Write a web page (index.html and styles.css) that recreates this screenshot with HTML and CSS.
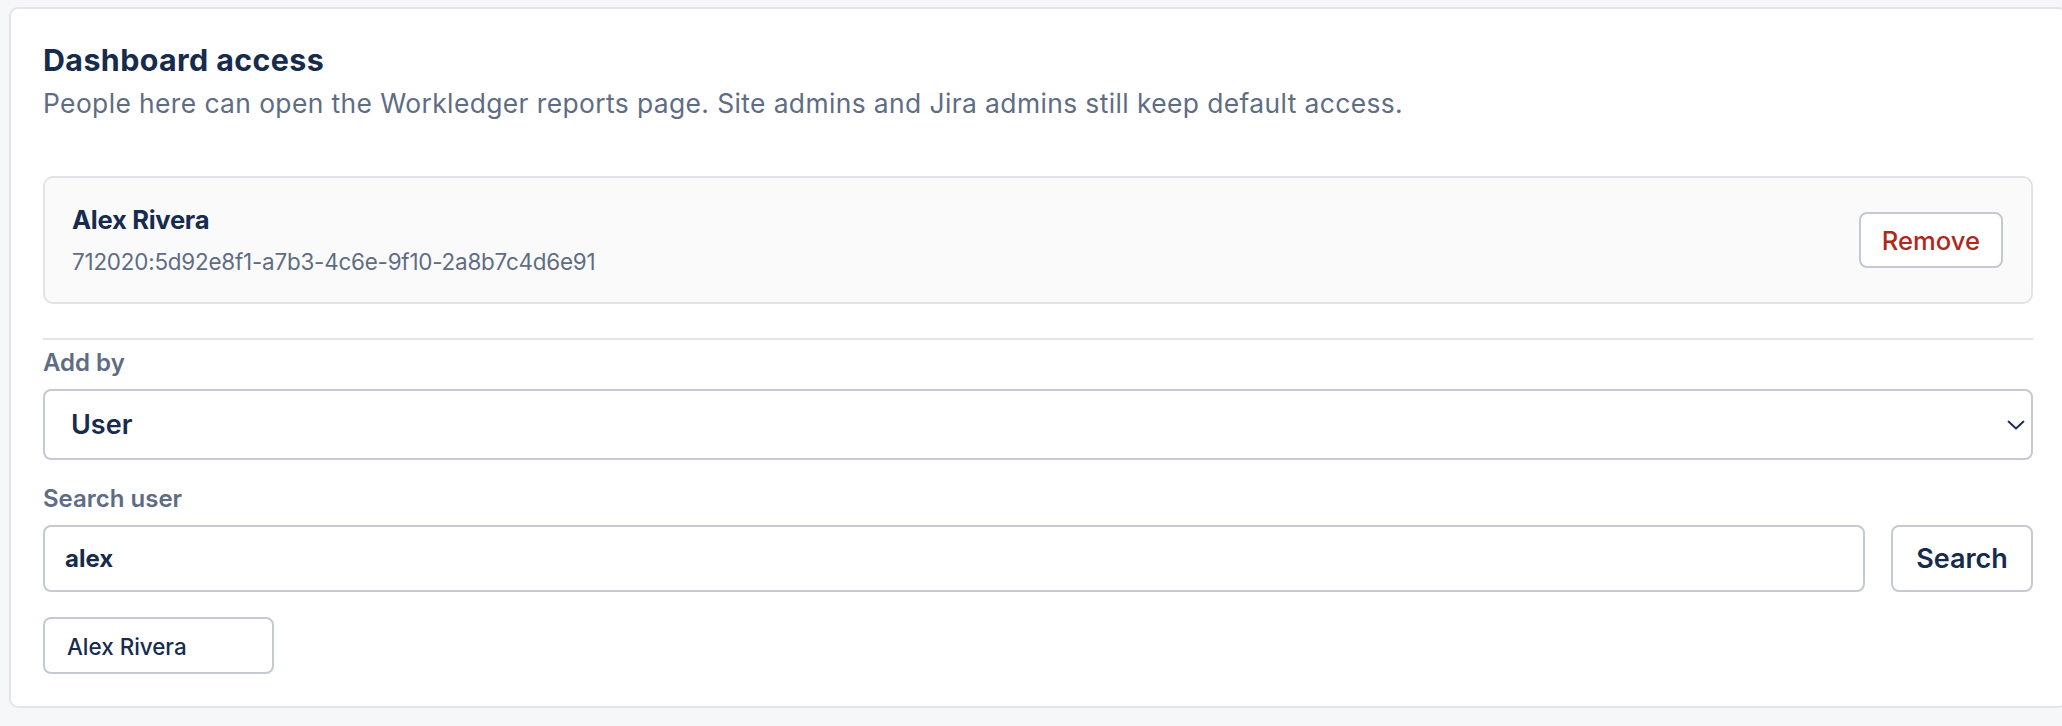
FILE: index.html
```html
<!DOCTYPE html>
<html lang="en">
<head>
<meta charset="utf-8">
<title>Dashboard access</title>
<link rel="stylesheet" href="styles.css">
</head>
<body>
  <section class="panel">
    <h2 class="panel-title">Dashboard access</h2>
    <p class="panel-desc">People here can open the Workledger reports page. Site admins and Jira admins still keep default access.</p>

    <div class="member">
      <div class="member-info">
        <div class="member-name">Alex Rivera</div>
        <div class="member-id">712020:5d92e8f1-a7b3-4c6e-9f10-2a8b7c4d6e91</div>
      </div>
      <button class="btn btn-danger" type="button">Remove</button>
    </div>

    <hr class="divider">

    <label class="field-label" for="add-by">Add by</label>
    <div class="select-wrap">
      <select id="add-by" class="select">
        <option>User</option>
        <option>Group</option>
      </select>
      <svg class="select-arrow" width="18" height="10" viewBox="0 0 18 10" aria-hidden="true">
        <path d="M1.5 1.5 L9 8.5 L16.5 1.5" fill="none" stroke="#172b4d" stroke-width="1.8" stroke-linecap="round" stroke-linejoin="round"/>
      </svg>
    </div>

    <label class="field-label field-label-gap" for="search-user">Search user</label>
    <div class="search-row">
      <input id="search-user" class="input" type="text" value="alex">
      <button class="btn btn-search" type="button">Search</button>
    </div>

    <div class="results">
      <button class="btn btn-result" type="button">Alex Rivera</button>
    </div>
  </section>
</body>
</html>
```

FILE: styles.css
```css
html, body {
  margin: 0;
  padding: 0;
  overflow: hidden;
}

body {
  background: #f6f7f9;
  font-family: "Inter", "Noto Sans", "Liberation Sans", sans-serif;
  color: #172b4d;
}

.panel {
  box-sizing: border-box;
  width: 2058px;
  margin: 7px 0 0 9px;
  padding: 33px 32px 32px 32px;
  background: #ffffff;
  border: 2px solid #e3e5ea;
  border-radius: 9px;
}

.panel-title {
  margin: 0;
  font-size: 30.4px;
  line-height: 36px;
  font-weight: 700;
  color: #172b4d;
  letter-spacing: 0.4px;
}

.panel-desc {
  margin: 6px 0 0 0;
  font-size: 26.4px;
  line-height: 38px;
  font-weight: 400;
  color: #5e6c84;
  letter-spacing: 0.4px;
}

.member {
  display: flex;
  align-items: center;
  justify-content: space-between;
  margin-top: 54px;
  padding: 24px 28px 24px 27px;
  background: #fafafb;
  border: 2px solid #e1e3e8;
  border-radius: 10px;
}

.member-info {
  display: flex;
  flex-direction: column;
}

.member-name {
  font-size: 25.6px;
  line-height: 36px;
  font-weight: 700;
  color: #172b4d;
  letter-spacing: -0.3px;
}

.member-id {
  margin-top: 8px;
  font-size: 22.4px;
  line-height: 32px;
  color: #5e6c84;
  letter-spacing: -0.2px;
}

.btn {
  box-sizing: border-box;
  font-family: inherit;
  background: #ffffff;
  border: 2px solid #c4c9d2;
  border-radius: 8px;
  cursor: pointer;
}

.btn-danger {
  height: 56px;
  padding: 0 21px;
  font-size: 25.6px;
  font-weight: 500;
  color: #b0281c;
}

.divider {
  margin: 34px 0 0 0;
  border: 0;
  height: 2px;
  background: #e1e3e8;
}

.field-label {
  display: block;
  margin-top: 7px;
  font-size: 24px;
  line-height: 32px;
  font-weight: 600;
  color: #5e6c84;
}

.field-label-gap {
  margin-top: 23px;
}

.select-wrap {
  position: relative;
  margin-top: 10px;
}

.select {
  box-sizing: border-box;
  display: block;
  width: 100%;
  height: 71px;
  padding: 0 40px 0 26px;
  font-family: inherit;
  font-size: 27px;
  font-weight: 600;
  color: #172b4d;
  background: #ffffff;
  border: 2px solid #c4c9d2;
  border-radius: 8px;
  appearance: none;
  -webkit-appearance: none;
}

.select-arrow {
  position: absolute;
  right: 8px;
  top: 31px;
  pointer-events: none;
}

.search-row {
  display: flex;
  gap: 26px;
  margin-top: 10px;
}

.input {
  box-sizing: border-box;
  flex: 1;
  height: 67px;
  padding: 0 20px;
  font-family: inherit;
  font-size: 24px;
  font-weight: 700;
  color: #172b4d;
  background: #ffffff;
  border: 2px solid #c4c9d2;
  border-radius: 8px;
  outline: none;
}

.btn-search {
  width: 142px;
  height: 67px;
  font-size: 27px;
  font-weight: 600;
  color: #172b4d;
}

.results {
  display: flex;
  margin-top: 25px;
}

.btn-result {
  width: 231px;
  height: 57px;
  padding: 2px 22px 0 22px;
  text-align: left;
  font-size: 22.4px;
  font-weight: 500;
  color: #172b4d;
}
```
